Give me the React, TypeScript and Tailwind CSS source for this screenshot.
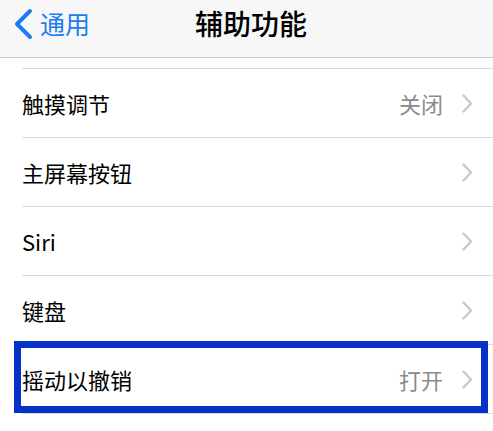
import React from 'react';

const Chevron = () => (
    <svg width="11" height="19" viewBox="0 0 11 19" className="shrink-0">
        <path d="M1.5 1.5 L9 9.5 L1.5 17.5" fill="none" stroke="#c7c7cc" strokeWidth="2.2" strokeLinecap="round" strokeLinejoin="round" />
    </svg>
);

type RowProps = { label: string; value?: string; highlight?: boolean };

const Row = ({ label, value, highlight }: RowProps) => (
    <div className="relative h-[69px] pl-[22px]">
        <div className="h-full flex items-center justify-between pr-[20px] border-b border-[#d9d9dc]">
            <span className="text-[22px] text-black">{label}</span>
            <div className="flex items-center gap-[19px]">
                {value && <span className="text-[22px] text-[#8a8a8e]">{value}</span>}
                <Chevron />
            </div>
        </div>
        {highlight && (
            <div className="absolute left-[14px] top-[-4px] w-[474px] h-[72px] border-[7px] border-[#0432c8] pointer-events-none" />
        )}
    </div>
);

const App = () => {
    const rows: RowProps[] = [
        { label: '触摸调节', value: '关闭' },
        { label: '主屏幕按钮' },
        { label: 'Siri' },
        { label: '键盘' },
        { label: '摇动以撤销', value: '打开', highlight: true }
    ];

    return (
        <div className="w-[493px] h-[431px] bg-white overflow-hidden font-['Noto_Sans_CJK_SC',sans-serif]">
            <div className="relative h-[58px] bg-[#f7f7f7] border-b border-[#c9c9cc] flex items-center pb-[10px]">
                <div className="flex items-center pl-[13px] gap-[7px]">
                    <svg width="20" height="32" viewBox="0 0 20 32">
                        <path d="M17 3 L4 16 L17 29" fill="none" stroke="#1b7cf6" strokeWidth="4" strokeLinecap="round" strokeLinejoin="round" />
                    </svg>
                    <span className="text-[25px] text-[#1b7cf6] leading-none">通用</span>
                </div>
                <span className="absolute left-[195px] top-[9px] text-[28px] font-medium text-black leading-none">辅助功能</span>
            </div>
            <div className="pt-[10px]">
                <div className="ml-[22px] border-b border-[#d9d9dc]" />
                {rows.map((row) => (
                    <Row key={row.label} {...row} />
                ))}
            </div>
        </div>
    );
};

export default App;
